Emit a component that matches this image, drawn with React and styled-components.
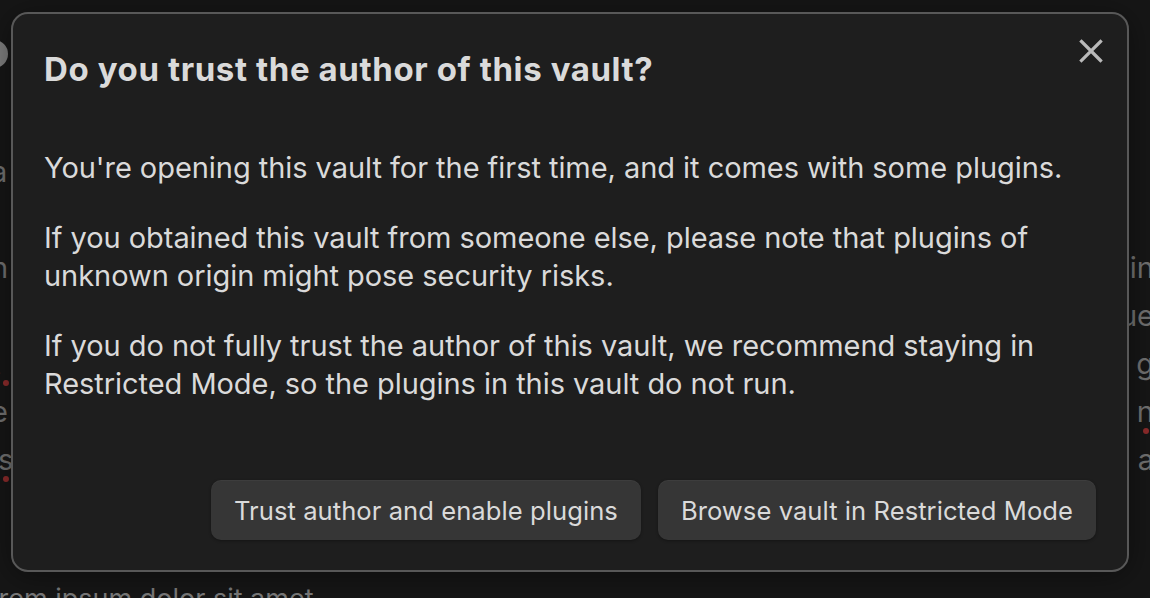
import React from 'react';
import styled, { createGlobalStyle } from 'styled-components';

const GlobalStyle = createGlobalStyle`
    html, body {
        margin: 0;
        padding: 0;
        background-color: #161616;
        overflow: hidden;
    }
    * {
        box-sizing: border-box;
    }
`;

const backgroundLines = [
    { left: 'a', right: '' },
    { left: '', right: '' },
    { left: 'n', right: 'in' },
    { left: '', right: 'ue' },
    { left: 't', right: 'g', mark: 'left' },
    { left: 'e', right: 'n', mark: 'right' },
    { left: 'is', right: 'a', mark: 'left' },
];

function App() {
    return <Page>
        <GlobalStyle />
        <Editor>
            <Bullet />
            <Lines>
                {backgroundLines.map((line, i) => (
                    <EditorLine key={i}>
                        <Fragment $side="left" $mark={line.mark === 'left'}>{line.left}</Fragment>
                        <Fragment $side="right" $mark={line.mark === 'right'}>{line.right}</Fragment>
                    </EditorLine>
                ))}
            </Lines>
            <LastLine>Lorem ipsum dolor sit amet</LastLine>
        </Editor>
        <Overlay>
            <Modal>
                <CloseButton aria-label="Close">
                    <svg width="24" height="24" viewBox="0 0 24 24" fill="none" stroke="currentColor" strokeWidth="3.2" strokeLinecap="square">
                        <path d="M2.5 2.5 L21.5 21.5 M21.5 2.5 L2.5 21.5" />
                    </svg>
                </CloseButton>
                <Title>Do you trust the author of this vault?</Title>
                <Body>
                    <p>You're opening this vault for the first time, and it comes with some plugins.</p>
                    <p>If you obtained this vault from someone else, please note that plugins of unknown origin might pose security risks.</p>
                    <p>If you do not fully trust the author of this vault, we recommend staying in Restricted Mode, so the plugins in this vault do not run.</p>
                </Body>
                <ButtonRow>
                    <Button>Trust author and enable plugins</Button>
                    <Button>Browse vault in Restricted Mode</Button>
                </ButtonRow>
            </Modal>
        </Overlay>
    </Page>;
}

const Page = styled.div`
    position: relative;
    width: 1150px;
    height: 598px;
    overflow: hidden;
    background-color: #161616;
    font-family: Inter, "Noto Sans", sans-serif;
`;

const Editor = styled.div`
    display: flex;
    flex-direction: column;
    height: 100%;
    padding-top: 40px;
    color: #707070;
    font-size: 29px;
`;

const Bullet = styled.span`
    width: 28px;
    height: 28px;
    margin-left: -20px;
    border-radius: 50%;
    background-color: #7d7d7d;
`;

const Lines = styled.div`
    display: flex;
    flex-direction: column;
    margin-top: 80px;
`;

const EditorLine = styled.div`
    display: flex;
    justify-content: space-between;
    height: 48px;
    line-height: 48px;
    margin: 0 -4px 0 -9px;
`;

const Fragment = styled.span`
    position: relative;
    &::after {
        content: '';
        display: ${p => (p.$mark ? 'block' : 'none')};
        position: absolute;
        ${p => (p.$side === 'left' ? 'left: 12px;' : 'left: 6px;')}
        bottom: 2px;
        width: 6px;
        height: 6px;
        border-radius: 50%;
        background-color: #8c2b2b;
    }
`;

const LastLine = styled.div`
    margin-top: auto;
    margin-left: -33px;
    margin-bottom: -16px;
    font-size: 27px;
    line-height: 30px;
    color: #7a7a7a;
`;

const Overlay = styled.div`
    position: absolute;
    inset: 0;
    display: flex;
    padding: 12px 21px 26px 11px;
`;

const Modal = styled.div`
    position: relative;
    flex: 1;
    display: flex;
    flex-direction: column;
    padding: 35px 31px 30px 31px;
    background-color: #1e1e1e;
    border: 2px solid #585858;
    border-radius: 17px;
    color: #dadada;
    box-shadow: 0 4px 30px rgba(0, 0, 0, 0.4);
`;

const CloseButton = styled.button`
    position: absolute;
    top: 23px;
    right: 22px;
    display: flex;
    align-items: center;
    justify-content: center;
    width: 28px;
    height: 28px;
    padding: 0;
    background: transparent;
    border: none;
    color: #bababa;
    cursor: pointer;
`;

const Title = styled.h1`
    margin: 0;
    font-size: 33px;
    font-weight: 700;
    line-height: 40px;
    letter-spacing: 0.6px;
`;

const Body = styled.div`
    margin-top: 60px;
    font-size: 29px;
    line-height: 38px;
    letter-spacing: -0.05px;
    p {
        margin: 0 0 32px 0;
    }
`;

const ButtonRow = styled.div`
    display: flex;
    justify-content: flex-end;
    gap: 17px;
    margin-top: auto;
`;

const Button = styled.button`
    height: 60px;
    padding: 0 23px;
    border: none;
    border-radius: 10px;
    background-color: #363636;
    color: #dadada;
    font-family: Inter, "Noto Sans", sans-serif;
    font-size: 25.6px;
    letter-spacing: 0.05px;
    box-shadow: 0 1px 3px rgba(0, 0, 0, 0.35), inset 0 1px 0 rgba(255, 255, 255, 0.04);
    cursor: pointer;
`;

export default App;
